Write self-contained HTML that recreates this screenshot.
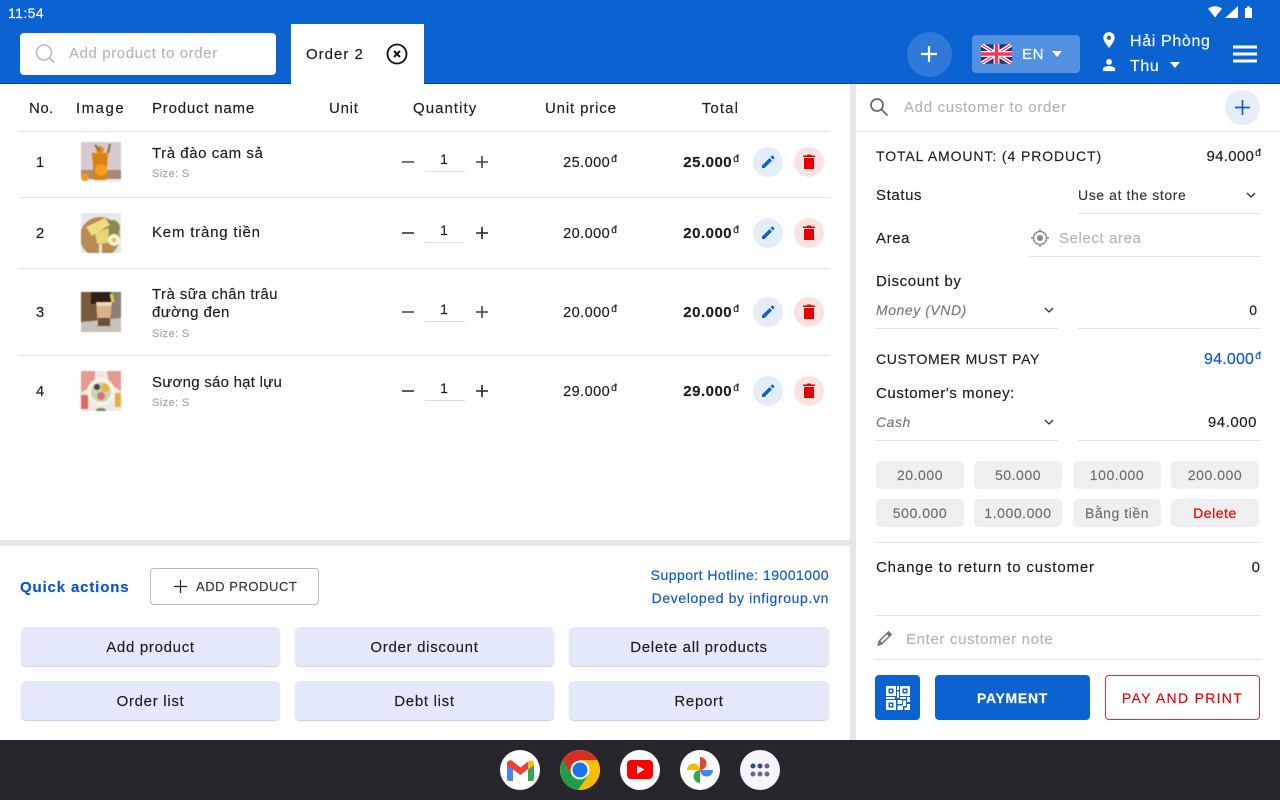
<!DOCTYPE html>
<html lang="en"><head><meta charset="utf-8"><title>POS Order</title>
<style>
*{box-sizing:border-box}
html,body{margin:0;padding:0;width:1280px;height:800px;overflow:hidden;background:#fff}
body{position:relative;font-family:"Liberation Sans","Noto Sans CJK SC",sans-serif;font-size:15px;color:#1c1c1c;letter-spacing:.7px;-webkit-text-stroke:.15px}
.a,.t,.r,.c{position:absolute}
.t,.r,.c{line-height:20px;height:20px;white-space:nowrap}
.r{transform:translateX(-100%)}
.c{transform:translateX(-50%)}
.g{color:#b5b5b5}
.s{font-size:11px;color:#a5a5a5;letter-spacing:.4px}
.b{font-weight:bold;letter-spacing:.5px;font-size:15px}
.p{font-size:14.500px;letter-spacing:.45px}
sup{font-size:10.500px;line-height:0;vertical-align:5px;letter-spacing:0;margin-left:1px;font-weight:normal}
.l{position:absolute;height:1px;background:#e2e2e2}
.cb{position:absolute;width:30px;height:30px;border-radius:50%}
.blue{background:#e4edf9}.red{background:#fbe2e2}
.cb svg{position:absolute;left:5px;top:5px}
.qa{position:absolute;height:39px;background:#e3e8fa;border-radius:5px;box-shadow:0 1px 1px #ccd;text-align:center;line-height:41px}
.mb{position:absolute;width:88px;height:28px;background:#efeff1;border-radius:5px;text-align:center;line-height:28px;color:#6d6d6d;font-size:14px;letter-spacing:.55px}
.dock{position:absolute;top:750px;width:40px;height:40px;border-radius:50%;background:#fff;overflow:hidden}
.dock svg{position:absolute;left:0;top:0}
.img{position:absolute;left:81px;width:40px;height:40px;filter:blur(.5px)}
</style></head><body>

<div class="a" style="left:0;top:0;width:1280px;height:84px;background:#0a63d0;border-bottom:1px solid #0040c4"></div>
<div class="t" style="left:8px;top:3px;color:#fff;font-size:14px;letter-spacing:.4px">11:54</div>
<svg class="a" style="left:1207px;top:5px" width="50" height="15" viewBox="0 0 50 15"><path d="M1 3.500Q8-1 15 3.500L8 12.500Z" fill="#fff"/><path d="M18 13L31 1V13Z" fill="#fff"/><path d="M38 3H40V1.500H43V3H45V13H38Z" fill="#fff"/></svg>

<div class="a" style="left:20px;top:33px;width:256px;height:42px;background:#fff;border-radius:4px"></div>
<svg class="a" style="left:34px;top:43px" width="22" height="22" viewBox="0 0 22 22" fill="none" stroke="#b9b9b9" stroke-width="1.600"><circle cx="10" cy="9.500" r="7.500"/><path d="M15.500 15L20 19.500"/></svg>
<div class="t g" style="left:69px;top:44px;letter-spacing:.6px">Add product to order</div>

<div class="a" style="left:291px;top:24px;width:133px;height:60px;background:#fff"></div>
<div class="t" style="left:306px;top:45px;letter-spacing:1px">Order 2</div>
<svg class="a" style="left:386px;top:43px" width="22" height="22" viewBox="0 0 22 22" fill="none" stroke="#111"><circle cx="11" cy="11" r="9.500" stroke-width="1.800"/><path d="M8 8L14 14M14 8L8 14" stroke-width="2"/></svg>

<div class="a" style="left:907px;top:32px;width:45px;height:45px;border-radius:50%;background:#2f79d8"></div>
<svg class="a" style="left:919px;top:44px" width="20" height="20" viewBox="0 0 20 20"><path d="M10 2V18M2 10H18" stroke="#fff" stroke-width="2.200"/></svg>
<div class="a" style="left:972px;top:35px;width:108px;height:38px;border-radius:4px;background:#5291e0"></div>
<svg class="a" style="left:981px;top:44px" width="31" height="20" viewBox="0 0 32 20"><rect width="32" height="20" fill="#2a2f78"/><path d="M0 0L32 20M32 0L0 20" stroke="#fff" stroke-width="4"/><path d="M0 0L32 20M32 0L0 20" stroke="#f4385a" stroke-width="1.300"/><path d="M16 0V20M0 10H32" stroke="#fff" stroke-width="6"/><path d="M16 0V20M0 10H32" stroke="#f4385a" stroke-width="3.500"/></svg>
<div class="t" style="left:1022px;top:45px;color:#fff;letter-spacing:.6px;font-size:15px">EN</div>
<svg class="a" style="left:1051px;top:51px" width="12" height="7"><path d="M1 0H11L6 6Z" fill="#fff"/></svg>
<svg class="a" style="left:1102px;top:31px" width="14" height="18" viewBox="0 0 16 20"><path d="M8 1C4 1 1.500 4 1.500 7.500C1.500 11.500 8 19 8 19C8 19 14.500 11.500 14.500 7.500C14.500 4 12 1 8 1Z" fill="#fff"/><circle cx="8" cy="7.500" r="2.300" fill="#0a63d0"/></svg>
<div class="t" style="left:1130px;top:32px;color:#fff;font-size:16px;letter-spacing:.65px">Hải Phòng</div>
<svg class="a" style="left:1102px;top:58px" width="14" height="14" viewBox="0 0 16 16" fill="#fff"><circle cx="8" cy="4.500" r="3.300"/><path d="M1 15V12.500C1 10.500 5 9.300 8 9.300C11 9.300 15 10.500 15 12.500V15Z"/></svg>
<div class="t" style="left:1130px;top:57px;color:#fff;font-size:16px;letter-spacing:.6px">Thu</div>
<svg class="a" style="left:1169px;top:62px" width="12" height="7"><path d="M1 0H11L6 6Z" fill="#fff"/></svg>
<svg class="a" style="left:1233px;top:45px" width="24" height="18"><path d="M0 2H24M0 9H24M0 16H24" stroke="#fff" stroke-width="3"/></svg>

<div class="a" style="left:850px;top:84px;width:6px;height:656px;background:#e6e6e6"></div>
<div class="a" style="left:0;top:540px;width:850px;height:6px;background:#e6e6e6"></div>

<div class="t" style="left:29px;top:99px;letter-spacing:.5px">No.</div>
<div class="t" style="left:76px;top:99px;letter-spacing:1.500px">Image</div>
<div class="t" style="left:152px;top:99px;letter-spacing:.8px">Product name</div>
<div class="t" style="left:329px;top:99px;letter-spacing:.75px">Unit</div>
<div class="t" style="left:413px;top:99px;letter-spacing:1.050px">Quantity</div>
<div class="t" style="left:545px;top:99px;letter-spacing:.85px">Unit price</div>
<div class="r" style="left:739px;top:99px;letter-spacing:1.100px">Total</div>
<div class="l" style="left:20px;top:131px;width:810px"></div>
<div class="l" style="left:20px;top:197px;width:810px"></div>
<div class="l" style="left:20px;top:268px;width:810px"></div>
<div class="l" style="left:20px;top:355px;width:810px"></div>

<!-- row 1 -->
<div class="c" style="left:40px;top:153px;letter-spacing:0">1</div>
<svg class="img" style="top:142px" viewBox="0 0 40 40"><rect width="40" height="40" fill="#d8c8d0"/><rect y="28" width="40" height="9" fill="#a98a70"/><rect y="37" width="40" height="3" fill="#eee"/><path d="M11 11H27L25 38H13Z" fill="#d9820f"/><circle cx="20" cy="28" r="6" fill="#f0a020"/><circle cx="19" cy="8" r="4" fill="#ee8a10"/><path d="M27 11L29 2M14 3L19 9" stroke="#5f7a40" stroke-width="2"/><circle cx="4" cy="35" r="4" fill="#ee9a20"/></svg>
<div class="t" style="left:152px;top:144px;letter-spacing:.55px">Trà đào cam sả</div>
<div class="t s" style="left:152px;top:164px">Size: S</div>
<!-- row 2 -->
<div class="c" style="left:40px;top:224px;letter-spacing:0">2</div>
<svg class="img" style="top:213px" viewBox="0 0 40 40"><rect width="40" height="40" fill="#e6e6ec"/><circle cx="19" cy="24" r="20" fill="#b98a52"/><circle cx="31" cy="15" r="8" fill="#8d8a50"/><path d="M5 14L24 5L29 12L11 23Z" fill="#ecdc84"/><path d="M14 20L28 15L27 30L16 31Z" fill="#e8d670"/><rect x="18" y="31" width="3" height="9" fill="#efe6d0"/><circle cx="33" cy="27" r="6" fill="#f6f2e0"/><circle cx="33" cy="27" r="2" fill="#f0c020"/></svg>
<div class="t" style="left:152px;top:223px;letter-spacing:.8px">Kem tràng tiền</div>
<!-- row 3 -->
<div class="c" style="left:40px;top:303px;letter-spacing:0">3</div>
<svg class="img" style="top:292px" viewBox="0 0 40 40"><rect width="40" height="40" fill="#7a5a3c"/><rect width="22" height="12" x="10" fill="#2c2018"/><rect x="30" width="10" height="40" fill="#8a8078"/><path d="M0 30L40 26V40H0Z" fill="#c6c2b8"/><path d="M15 10H31L29 34H17Z" fill="#dcb08c"/><path d="M15 10H31L30 14H16Z" fill="#eed6c0"/><path d="M17 26H29L29 34H17Z" fill="#6a5040"/><path d="M30 2L32 10" stroke="#f0d030" stroke-width="3"/></svg>
<div class="t" style="left:152px;top:285px;letter-spacing:.42px">Trà sữa chân trâu</div>
<div class="t" style="left:152px;top:303px;letter-spacing:.4px">đường đen</div>
<div class="t s" style="left:152px;top:324px">Size: S</div>
<!-- row 4 -->
<div class="c" style="left:40px;top:382px;letter-spacing:0">4</div>
<svg class="img" style="top:371px" viewBox="0 0 40 40"><rect width="40" height="40" fill="#f0e8e4"/><path d="M0 0H14V12L0 22ZM26 0H40V20L28 12Z" fill="#e49a8c"/><rect y="24" width="7" height="14" fill="#e06a60"/><rect x="34" y="22" width="6" height="14" fill="#e0b040"/><circle cx="20" cy="21" r="14" fill="#f6f2e8"/><circle cx="20" cy="21" r="10" fill="#c8d8b0"/><circle cx="24" cy="17" r="4" fill="#eab040"/><circle cx="20" cy="25" r="4" fill="#d87080"/><circle cx="16" cy="16" r="3" fill="#444"/><ellipse cx="20" cy="39" rx="5" ry="2" fill="#5aa060"/></svg>
<div class="t" style="left:152px;top:373px;letter-spacing:.25px">Sương sáo hạt lựu</div>
<div class="t s" style="left:152px;top:393px">Size: S</div>

<!-- qty -->
<svg class="a" style="left:400px;top:150px" width="95" height="260" viewBox="0 0 95 260" fill="none" stroke="#444" stroke-width="1.600"><path d="M2 12H14M76 12H88M82 6V18"/><path d="M2 83H14M76 83H88M82 77V89" stroke="#222"/><path d="M2 162H14M76 162H88M82 156V168"/><path d="M2 241H14M76 241H88M82 235V247" stroke="#222"/></svg>
<div class="c" style="left:444px;top:149px;letter-spacing:0;font-size:14px">1</div><div class="l" style="left:425px;top:171px;width:40px;background:#ddd"></div>
<div class="c" style="left:444px;top:220px;letter-spacing:0;font-size:14px">1</div><div class="l" style="left:425px;top:242px;width:40px;background:#ddd"></div>
<div class="c" style="left:444px;top:299px;letter-spacing:0;font-size:14px">1</div><div class="l" style="left:425px;top:321px;width:40px;background:#ddd"></div>
<div class="c" style="left:444px;top:378px;letter-spacing:0;font-size:14px">1</div><div class="l" style="left:425px;top:400px;width:40px;background:#ddd"></div>

<!-- prices -->
<div class="r p" style="left:617px;top:153px">25.000<sup>đ</sup></div>
<div class="r p" style="left:617px;top:224px">20.000<sup>đ</sup></div>
<div class="r p" style="left:617px;top:303px">20.000<sup>đ</sup></div>
<div class="r p" style="left:617px;top:382px">29.000<sup>đ</sup></div>
<div class="r b" style="left:739px;top:153px">25.000<sup>đ</sup></div>
<div class="r b" style="left:739px;top:224px">20.000<sup>đ</sup></div>
<div class="r b" style="left:739px;top:303px">20.000<sup>đ</sup></div>
<div class="r b" style="left:739px;top:382px">29.000<sup>đ</sup></div>

<!-- actions -->
<div class="cb blue" style="left:753px;top:147px"><svg width="20" height="20" viewBox="0 0 20 20" fill="#0a63d0"><path d="M4 13.500V16H6.500L14 8.500L11.500 6ZM12.500 5L15 7.500L16.200 6.300C16.600 5.900 16.600 5.500 16.200 5.100L14.900 3.800C14.500 3.400 14.100 3.400 13.700 3.800Z"/></svg></div>
<div class="cb red" style="left:794px;top:147px"><svg width="20" height="20" viewBox="0 0 20 20" fill="#e60000"><path d="M5 6H15V17H5ZM4 3.500H7.500L8.500 2.500H11.500L12.500 3.500H16V5H4Z"/></svg></div>
<div class="cb blue" style="left:753px;top:218px"><svg width="20" height="20" viewBox="0 0 20 20" fill="#0a63d0"><path d="M4 13.500V16H6.500L14 8.500L11.500 6ZM12.500 5L15 7.500L16.200 6.300C16.600 5.900 16.600 5.500 16.200 5.100L14.900 3.800C14.500 3.400 14.100 3.400 13.700 3.800Z"/></svg></div>
<div class="cb red" style="left:794px;top:218px"><svg width="20" height="20" viewBox="0 0 20 20" fill="#e60000"><path d="M5 6H15V17H5ZM4 3.500H7.500L8.500 2.500H11.500L12.500 3.500H16V5H4Z"/></svg></div>
<div class="cb blue" style="left:753px;top:297px"><svg width="20" height="20" viewBox="0 0 20 20" fill="#0a63d0"><path d="M4 13.500V16H6.500L14 8.500L11.500 6ZM12.500 5L15 7.500L16.200 6.300C16.600 5.900 16.600 5.500 16.200 5.100L14.900 3.800C14.500 3.400 14.100 3.400 13.700 3.800Z"/></svg></div>
<div class="cb red" style="left:794px;top:297px"><svg width="20" height="20" viewBox="0 0 20 20" fill="#e60000"><path d="M5 6H15V17H5ZM4 3.500H7.500L8.500 2.500H11.500L12.500 3.500H16V5H4Z"/></svg></div>
<div class="cb blue" style="left:753px;top:376px"><svg width="20" height="20" viewBox="0 0 20 20" fill="#0a63d0"><path d="M4 13.500V16H6.500L14 8.500L11.500 6ZM12.500 5L15 7.500L16.200 6.300C16.600 5.900 16.600 5.500 16.200 5.100L14.900 3.800C14.500 3.400 14.100 3.400 13.700 3.800Z"/></svg></div>
<div class="cb red" style="left:794px;top:376px"><svg width="20" height="20" viewBox="0 0 20 20" fill="#e60000"><path d="M5 6H15V17H5ZM4 3.500H7.500L8.500 2.500H11.500L12.500 3.500H16V5H4Z"/></svg></div>

<!-- quick actions -->
<div class="t" style="left:20px;top:578px;color:#0a55c8;font-weight:bold;letter-spacing:.85px">Quick actions</div>
<div class="a" style="left:150px;top:568px;width:169px;height:37px;border:1px solid #b9b9b9;border-radius:4px"></div>
<svg class="a" style="left:173px;top:579px" width="15" height="15"><path d="M7.500 1V14M1 7.500H14" stroke="#222" stroke-width="1.200"/></svg>
<div class="t" style="left:196px;top:577px;font-size:13px;letter-spacing:.55px;color:#333">ADD PRODUCT</div>
<div class="r" style="left:829px;top:565px;color:#0a55c8;font-size:14px;letter-spacing:.47px">Support Hotline: 19001000</div>
<div class="r" style="left:829px;top:588px;color:#0a55c8;font-size:14px;letter-spacing:.62px">Developed by infigroup.vn</div>
<div class="qa" style="left:21px;top:627px;width:259px">Add product</div>
<div class="qa" style="left:295px;top:627px;width:259px">Order discount</div>
<div class="qa" style="left:569px;top:627px;width:260px">Delete all products</div>
<div class="qa" style="left:21px;top:681px;width:259px">Order list</div>
<div class="qa" style="left:295px;top:681px;width:259px">Debt list</div>
<div class="qa" style="left:569px;top:681px;width:260px">Report</div>

<!-- right panel -->
<svg class="a" style="left:869px;top:97px" width="20" height="20" viewBox="0 0 20 20" fill="none" stroke="#666" stroke-width="1.700"><circle cx="8" cy="8" r="6"/><path d="M12.500 12.500L18.500 18.500"/></svg>
<div class="t g" style="left:904px;top:98px;letter-spacing:.68px">Add customer to order</div>
<div class="a" style="left:1225px;top:90px;width:35px;height:35px;border-radius:50%;background:#e4edf9"></div>
<svg class="a" style="left:1234px;top:99px" width="17" height="17"><path d="M8.500 1V16M1 8.500H16" stroke="#1a5ac8" stroke-width="1.700"/></svg>
<div class="l" style="left:856px;top:131px;width:424px"></div>

<div class="t" style="left:876px;top:146px;font-size:14px;letter-spacing:.9px">TOTAL AMOUNT: (4 PRODUCT)</div>
<div class="r" style="left:1261px;top:147px;letter-spacing:.3px">94.000<sup>đ</sup></div>
<div class="t" style="left:876px;top:186px;letter-spacing:.6px">Status</div>
<div class="t" style="left:1078px;top:185px;font-size:14px;letter-spacing:.6px;color:#333">Use at the store</div>
<svg class="a" style="left:1246px;top:192px" width="10" height="6" fill="none" stroke="#333" stroke-width="1.300"><path d="M1 1L5 5L9 1"/></svg>
<div class="l" style="left:1078px;top:213px;width:182px"></div>
<div class="t" style="left:876px;top:229px;letter-spacing:.6px">Area</div>
<svg class="a" style="left:1030px;top:228px" width="20" height="20" viewBox="0 0 20 20" fill="none" stroke="#888" stroke-width="1.400"><circle cx="10" cy="10" r="6.500"/><circle cx="10" cy="10" r="3" fill="#888" stroke="none"/><path d="M10 1V3.500M10 16.500V19M1 10H3.500M16.500 10H19"/></svg>
<div class="t g" style="left:1059px;top:229px;letter-spacing:.6px">Select area</div>
<div class="l" style="left:1029px;top:256px;width:231px"></div>
<div class="t" style="left:876px;top:272px;letter-spacing:.65px">Discount by</div>
<div class="t" style="left:876px;top:300px;font-size:14px;font-style:italic;letter-spacing:.55px;color:#777">Money (VND)</div>
<svg class="a" style="left:1044px;top:307px" width="10" height="6" fill="none" stroke="#333" stroke-width="1.300"><path d="M1 1L5 5L9 1"/></svg>
<div class="r" style="left:1257px;top:300px;font-size:14px;letter-spacing:0">0</div>
<div class="l" style="left:876px;top:328px;width:182px"></div>
<div class="l" style="left:1078px;top:328px;width:182px"></div>

<div class="t" style="left:876px;top:349px;font-size:14px;letter-spacing:.65px">CUSTOMER MUST PAY</div>
<div class="r" style="left:1261px;top:350px;color:#0a55c8;font-size:16px;letter-spacing:.2px">94.000<sup>đ</sup></div>
<div class="t" style="left:876px;top:384px;letter-spacing:.6px">Customer's money:</div>
<div class="t" style="left:876px;top:412px;font-size:14px;font-style:italic;letter-spacing:.55px;color:#777">Cash</div>
<svg class="a" style="left:1044px;top:419px" width="10" height="6" fill="none" stroke="#333" stroke-width="1.300"><path d="M1 1L5 5L9 1"/></svg>
<div class="r" style="left:1257px;top:413px;letter-spacing:.55px">94.000</div>
<div class="l" style="left:876px;top:440px;width:182px"></div>
<div class="l" style="left:1078px;top:440px;width:182px"></div>

<div class="mb" style="left:876px;top:461px">20.000</div>
<div class="mb" style="left:974px;top:461px">50.000</div>
<div class="mb" style="left:1073px;top:461px">100.000</div>
<div class="mb" style="left:1171px;top:461px">200.000</div>
<div class="mb" style="left:876px;top:499px">500.000</div>
<div class="mb" style="left:974px;top:499px">1.000.000</div>
<div class="mb" style="left:1073px;top:499px">Bằng tiền</div>
<div class="mb" style="left:1171px;top:499px;color:#e60000">Delete</div>
<div class="l" style="left:876px;top:542px;width:384px"></div>

<div class="t" style="left:876px;top:558px;letter-spacing:.85px">Change to return to customer</div>
<div class="r" style="left:1260px;top:558px;letter-spacing:0">0</div>
<div class="l" style="left:876px;top:615px;width:384px"></div>
<svg class="a" style="left:876px;top:629px" width="18" height="18" viewBox="0 0 18 18" fill="#777"><path d="M2 16.500L3 12L12.500 2.500L15.500 5.500L6 15Z" stroke="#777" stroke-width="1"/><path d="M4.500 12L11 5.500L12.500 7L6 13.500Z" fill="#fff"/></svg>
<div class="t g" style="left:906px;top:630px;letter-spacing:.65px">Enter customer note</div>
<div class="l" style="left:876px;top:659px;width:384px"></div>

<div class="a" style="left:875px;top:675px;width:45px;height:45px;border-radius:4px;background:#0a63d0"></div>
<svg class="a" style="left:886px;top:686px" width="24" height="24" viewBox="0 0 24 24" fill="#fff"><path fill-rule="evenodd" d="M0 0H10V10H0ZM2.500 2.500V7.500H7.500V2.500ZM14 0H24V10H14ZM16.500 2.500V7.500H21.500V2.500ZM0 14H10V24H0ZM2.500 16.500V21.500H7.500V16.500Z"/><rect x="4" y="4" width="2" height="2"/><rect x="18" y="4" width="2" height="2"/><rect x="4" y="18" width="2" height="2"/><path d="M11 0H13V4H11ZM11 5.500H13V12H11ZM0 11H9V13H0ZM14 11H20V13H14ZM21 11H24V16H21ZM11.500 14H16V18H11.500ZM17 14.500H20V20H17ZM11.500 19.500H17V24H11.500ZM21 18H24V24H18.500V21.500H21Z"/></svg>
<div class="a" style="left:935px;top:675px;width:155px;height:45px;border-radius:4px;background:#0a63d0;color:#fff;font-weight:bold;text-align:center;line-height:46px;letter-spacing:.7px;font-size:14px">PAYMENT</div>
<div class="a" style="left:1105px;top:675px;width:155px;height:45px;border-radius:4px;border:1px solid #e23030;background:#fff;color:#e60000;text-align:center;line-height:44px;letter-spacing:1.300px;font-size:14px">PAY AND PRINT</div>

<!-- dock -->
<div class="a" style="left:0;top:740px;width:1280px;height:60px;background:#26262c"></div>
<div class="dock" style="left:500px"><svg width="40" height="40" viewBox="0 0 40 40"><path d="M7 14V28.500C7 29.800 7.800 31 9 31H13V18Z" fill="#4285f4"/><path d="M28 18V31H32C33.200 31 34 29.800 34 28.500V14Z" fill="#34a853"/><path d="M7 16V13.500C7 10.500 10.500 9.500 12.500 11L20.500 17.500L28 11.500V19L20.500 25L13 19.500Z" fill="#ea4335"/><path d="M28 11.500C30.500 9.500 34 10.500 34 13.500V15L28 19.500Z" fill="#fbbc04"/></svg></div>
<div class="dock" style="left:560px"><svg width="40" height="40" viewBox="0 0 40 40"><circle cx="20" cy="20" r="20" fill="#fbbc04"/><path d="M2.700 10A20 20 0 0 0 18 39.900L28.700 25H11.300Z" fill="#1e9e47"/><path d="M2.700 10A20 20 0 0 1 37.300 10H20L11.300 25Z" fill="#d93025"/><circle cx="20" cy="20" r="9.500" fill="#fff"/><circle cx="20" cy="20" r="7.500" fill="#1a73e8"/></svg></div>
<div class="dock" style="left:620px"><svg width="40" height="40" viewBox="0 0 40 40"><rect x="7" y="10" width="26" height="19" rx="4" fill="#f00"/><path d="M17 15.500V24L24.500 19.500Z" fill="#fff"/></svg></div>
<div class="dock" style="left:680px"><svg width="40" height="40" viewBox="0 0 40 40"><path d="M20 20V7A6.500 6.500 0 0 1 20 20Z" fill="#ea4335"/><path d="M20 20H7A6.500 6.500 0 0 1 20 20Z" fill="#fbbc04"/><path d="M20 20V33A6.500 6.500 0 0 1 20 20Z" fill="#34a853"/><path d="M20 20H33A6.500 6.500 0 0 1 20 20Z" fill="#4285f4"/></svg></div>
<div class="dock" style="left:740px;background:#f7f5fb"><svg width="40" height="40" viewBox="0 0 40 40"><circle cx="13" cy="16" r="2.500" fill="#2e4a8a"/><circle cx="20" cy="16" r="2.500" fill="#2e4a8a"/><circle cx="27" cy="16" r="2.500" fill="#7b5c8c"/><circle cx="13" cy="24" r="2.500" fill="#6c6c7c"/><circle cx="20" cy="24" r="2.500" fill="#6c6c7c"/><circle cx="27" cy="24" r="2.500" fill="#6c6c7c"/></svg></div>
</body></html>
